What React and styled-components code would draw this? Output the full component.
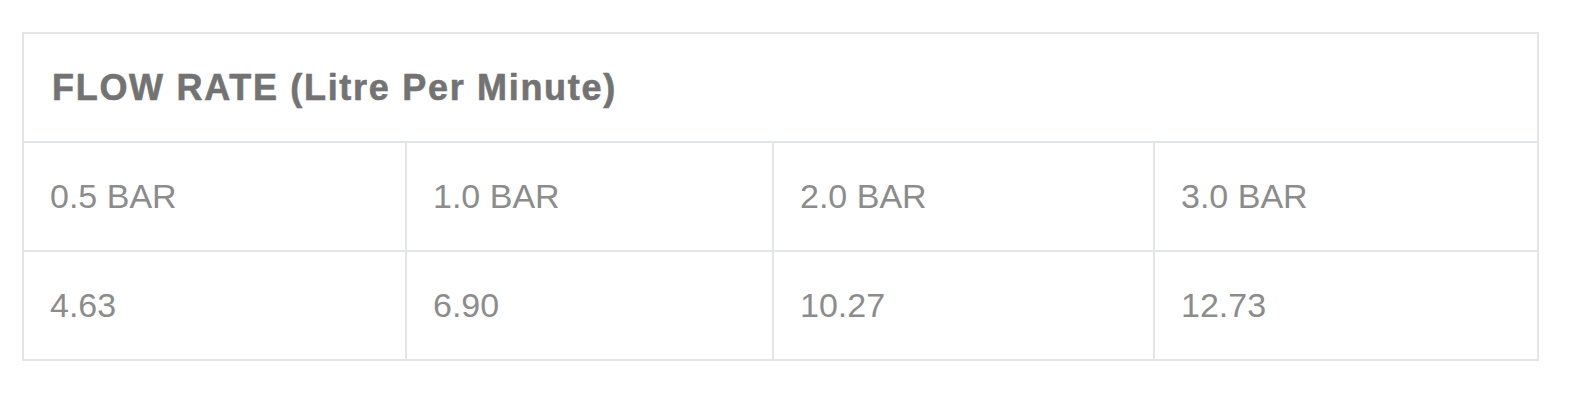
import React from "react";
import styled, { createGlobalStyle } from "styled-components";

const columns = ["0.5 BAR", "1.0 BAR", "2.0 BAR", "3.0 BAR"];
const values = ["4.63", "6.90", "10.27", "12.73"];
const widths = [383, 367, 381, 384];

function App() {
  return (
    <>
      <GlobalStyle />
      <Wrapper>
        <Table>
          <colgroup>
            {widths.map((w, i) => (
              <col key={i} style={{ width: w }} />
            ))}
          </colgroup>
          <tbody>
            <Row>
              <HeadCell colSpan={4}>FLOW RATE (Litre Per Minute)</HeadCell>
            </Row>
            <Row>
              {columns.map((c) => (
                <Cell key={c}>{c}</Cell>
              ))}
            </Row>
            <Row>
              {values.map((v) => (
                <Cell key={v}>{v}</Cell>
              ))}
            </Row>
          </tbody>
        </Table>
      </Wrapper>
    </>
  );
}

const GlobalStyle = createGlobalStyle`
  body {
    margin: 0;
    background: #ffffff;
    font-family: "Liberation Sans", Arial, sans-serif;
  }
`;

const Wrapper = styled.div`
  padding: 32px 0 0 22px;
`;

const Table = styled.table`
  border-collapse: collapse;
  table-layout: fixed;
  width: 1515px;
`;

const Row = styled.tr`
  height: 109px;
`;

const HeadCell = styled.td`
  border: 2px solid #e3e5e9;
  padding: 0 0 0 28px;
  font-size: 36px;
  font-weight: bold;
  letter-spacing: 1.7px;
  color: #737373;
  -webkit-text-stroke: 0.6px #737373;
  vertical-align: middle;
`;

const Cell = styled.td`
  border: 2px solid #e3e5e9;
  padding: 0 0 0 26px;
  font-size: 34px;
  font-weight: normal;
  color: #8c8c8c;
  vertical-align: middle;
`;

export default App;
